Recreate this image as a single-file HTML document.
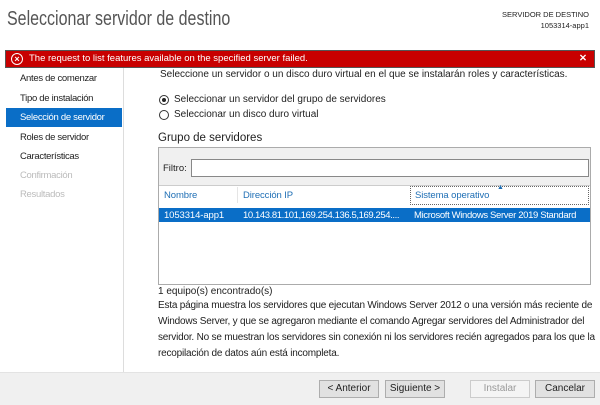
<html><head><style>
body{margin:0;width:600px;height:404px;background:#fff;font-family:"Liberation Sans",sans-serif;font-size:10px;color:#1e1e1e;position:relative;overflow:hidden}
.a{position:absolute;white-space:nowrap}
.btn{position:absolute;top:380px;height:16px;border:1px solid #adadad;background:#e1e1e1;text-align:center;line-height:16px;font-size:10px}
.nav{left:20px;font-size:9.5px;letter-spacing:-0.3px}
.t{font-size:9.5px;letter-spacing:-0.1px}
</style></head><body>
<div class="a" style="left:7px;top:8px;font-size:20px;color:#555;transform:scaleX(0.8);transform-origin:0 0">Seleccionar servidor de destino</div>
<div class="a" style="right:11px;top:9px;font-size:7.5px;text-align:right;line-height:11px">SERVIDOR DE DESTINO<br>1053314-app1</div>
<div class="a" style="left:5px;top:50px;width:588px;height:16px;background:#c80000;border:1px solid #555;color:#fff;font-size:9.5px;line-height:16px">
 <span style="position:absolute;left:5px;top:2px;width:10px;height:10px;border:1.3px solid #fff;border-radius:50%;font-size:9px;line-height:10px;text-align:center;font-weight:bold">×</span>
 <span style="position:absolute;left:23px">The request to list features available on the specified server failed.</span>
 <span style="position:absolute;right:7px;font-weight:bold">✕</span></div>
<div class="a" style="left:123px;top:68px;width:1px;height:304px;background:#ddd"></div>
<div class="a nav" style="top:73px">Antes de comenzar</div>
<div class="a nav" style="top:93px">Tipo de instalación</div>
<div class="a" style="left:6px;top:108px;width:116px;height:19px;background:#0a6ec7"></div>
<div class="a nav" style="top:112px;color:#fff">Selección de servidor</div>
<div class="a nav" style="top:132px">Roles de servidor</div>
<div class="a nav" style="top:151px">Características</div>
<div class="a nav" style="top:170px;color:#bbb">Confirmación</div>
<div class="a nav" style="top:189px;color:#bbb">Resultados</div>
<div class="a" style="left:160px;top:69px">Seleccione un servidor o un disco duro virtual en el que se instalarán roles y características.</div>
<div class="a" style="left:159px;top:95px;width:8px;height:8px;border:1px solid #333;border-radius:50%"><div style="margin:2px;width:4px;height:4px;border-radius:50%;background:#222"></div></div>
<div class="a" style="left:174px;top:94px">Seleccionar un servidor del grupo de servidores</div>
<div class="a" style="left:159px;top:110px;width:8px;height:8px;border:1px solid #333;border-radius:50%"></div>
<div class="a" style="left:174px;top:109px">Seleccionar un disco duro virtual</div>
<div class="a" style="left:158px;top:132px;font-size:11.5px">Grupo de servidores</div>
<div class="a" style="left:158px;top:147px;width:431px;height:136px;border:1px solid #ababab;background:#fff"></div>
<div class="a" style="left:159px;top:148px;width:431px;height:37px;background:#f0f0f0;border-bottom:1px solid #ccc"></div>
<div class="a" style="left:163px;top:163px;font-size:9.5px">Filtro:</div>
<div class="a" style="left:191px;top:159px;width:396px;height:16px;border:1px solid #888;background:#fff"></div>
<div class="a t" style="left:164px;top:190px;color:#1f6fb5">Nombre</div>
<div class="a" style="left:237px;top:187px;width:1px;height:16px;background:#e5e5e5"></div>
<div class="a t" style="left:243px;top:190px;color:#1f6fb5">Dirección IP</div>
<div class="a" style="left:410px;top:186px;width:177px;height:17px;border:1px dotted #666"></div>
<div class="a t" style="left:415px;top:190px;color:#1f6fb5">Sistema operativo</div>
<div class="a" style="left:497px;top:184px;color:#1f6fb5;font-size:7px">▲</div>
<div class="a" style="left:159px;top:208px;width:431px;height:14px;background:#0a6ec7"></div>
<div class="a t" style="left:164px;top:210px;color:#fff">1053314-app1</div>
<div class="a t" style="left:243px;top:210px;color:#fff;letter-spacing:-0.4px">10.143.81.101,169.254.136.5,169.254....</div>
<div class="a t" style="left:414px;top:210px;color:#fff;letter-spacing:-0.35px">Microsoft Windows Server 2019 Standard</div>
<div class="a" style="left:158px;top:286px">1 equipo(s) encontrado(s)</div>
<div class="a" style="left:158px;top:298px;line-height:16px;white-space:normal;width:442px;letter-spacing:-0.2px">Esta página muestra los servidores que ejecutan Windows Server 2012 o una versión más reciente de Windows Server, y que se agregaron mediante el comando Agregar servidores del Administrador del servidor. No se muestran los servidores sin conexión ni los servidores recién agregados para los que la recopilación de datos aún está incompleta.</div>
<div class="a" style="left:0;top:372px;width:600px;height:32px;background:#f0f0f0;border-top:1px solid #e3e3e3"></div>
<div class="btn" style="left:319px;width:58px">&lt; Anterior</div>
<div class="btn" style="left:385px;width:58px">Siguiente &gt;</div>
<div class="btn" style="left:470px;width:58px;color:#999;border-color:#ccc;background:#f4f4f4">Instalar</div>
<div class="btn" style="left:535px;width:58px">Cancelar</div>
</body></html>
